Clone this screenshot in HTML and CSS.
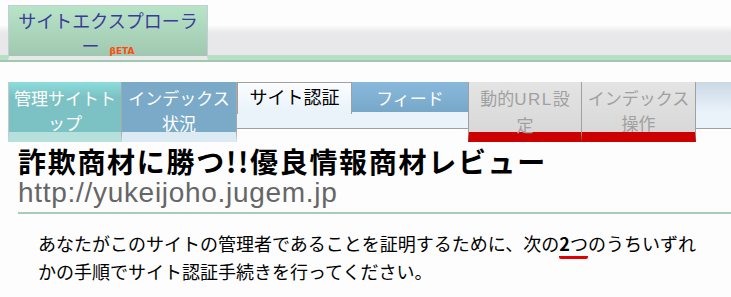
FILE: index.html
```html
<!DOCTYPE html>
<html lang="ja">
<head>
  <meta charset="UTF-8" />
  <title>サイトエクスプローラー - サイト認証</title>
  <link rel="stylesheet" href="styles.css">
</head>
<body>

  <!-- Header -->
  <div class="header">
    <div class="logo">サイトエクスプローラー<span class="beta">βETA</span></div>
  </div>

  <!-- Tabs -->
  <div class="tabs">
    <div class="tab tab-top">管理サイトトップ</div>
    <div class="tab tab-index">インデックス状況</div>
    <div class="tab tab-active">サイト認証</div>
    <div class="tab tab-feed">フィード</div>
    <div class="tab tab-off">動的<span class="latin">URL</span>設定</div>
    <div class="tab tab-off">インデックス操作</div>
  </div>

  <main>
    <h1>詐欺商材に勝つ!!優良情報商材レビュー</h1>
    <div class="site-url">http://yukeijoho.jugem.jp</div>

    <p class="intro">
      あなたがこのサイトの管理者であることを証明するために、次の<span class="mark"><b>2</b>つ</span>のうちいずれかの手順でサイト認証手続きを行ってください。
    </p>
  </main>

</body>
</html>
```

FILE: styles.css
```css
body {
  margin: 0;
  font-family: "Noto Sans CJK JP", sans-serif;
  background: #fdfdfd;
  color: #000;
}

/* header */
.header {
  height: 62px;
  padding: 5px 0 0 8px;
  box-sizing: border-box;
  background: linear-gradient(to bottom,
    #fdfdfd 0, #fdfdfd 25px, #e8e8ea 33px, #e8e8ea 55px,
    #b5e0c5 55px, #b5e0c5 60px, #a0c8b0 60px, #a0c8b0 62px);
}
.logo {
  width: 200px;
  height: 55px;
  box-sizing: border-box;
  border: 1px solid #c4ccd8;
  border-bottom: 4px solid #e8e8e8;
  background: linear-gradient(to bottom, #b8e4c8, #a0c8b0);
  color: #3a3a9a;
  font-size: 18px;
  line-height: 25px;
  text-align: center;
  padding: 2px 8px 0;
  overflow: hidden;
}
.beta {
  color: #ff4a10;
  font-family: "DejaVu Sans", sans-serif;
  font-size: 9px;
  font-weight: bold;
  margin-left: 10px;
  vertical-align: -1px;
}

/* tabs */
.tabs {
  display: flex;
  align-items: flex-start;
  margin: 20px 0 0 8px;
  height: 60px;
  background:
    linear-gradient(to bottom, #c9d9e5 0, #eaf2fa 30px, #eaf2fa 46px, #a0a0a0 46px, #a0a0a0 47px, #fdfdfd 47px);
}
.tab {
  width: 114px;
  box-sizing: border-box;
  border-right: 1px solid #a8a8a8;
  color: #fff;
  font-size: 17px;
  line-height: 25px;
  text-align: center;
  padding: 3px 4px 0;
  height: 60px;
}
.tab-top {
  border-left: 1px solid #c8c8c8;
  background: linear-gradient(to bottom, #8cdcdc, #7cc2c4 30%, #7cc2c4);
  border-bottom: 10px solid #b6e0dc;
}
.tab-index {
  width: 115px;
  background: #7aaac8;
  border-bottom: 10px solid #dceaf4;
}
.tab-active {
  width: 115px;
  height: 32px;
  border: 1px solid #a0a0a0;
  border-bottom: none;
  background: linear-gradient(to bottom, #fbfdfe, #e8f2fa);
  color: #000;
  font-size: 18px;
  padding-top: 1px;
}
.tab-feed {
  width: 116px;
  height: 30px;
  background: linear-gradient(to bottom, #88b8dc, #78a8c8);
  border-right: none;
}
.tab-off {
  border-left: 1px solid #a0a0a0;
  border-right: 1px solid #a0a0a0;
  background: linear-gradient(to bottom, #e4e4e4, #d8d8d8);
  color: #a0a0a0;
  border-bottom: 10px solid #cc0000;
}
.tab-off + .tab-off {
  border-left: none;
}
.latin {
  font-family: "Liberation Sans", sans-serif;
  letter-spacing: 1.5px;
}

/* content */
main {
  padding: 3px 0 0 18px;
}
h1 {
  margin: 0;
  font-size: 28px;
  line-height: 32px;
  font-weight: bold;
  letter-spacing: 1.7px;
}
.site-url {
  font-family: "Liberation Sans", sans-serif;
  font-size: 28px;
  line-height: 32px;
  letter-spacing: 0.7px;
  color: #666;
  padding-bottom: 3px;
  border-bottom: 2px solid #a8cdb6;
}
.intro {
  margin: 15px 0 0;
  padding: 0 20px;
  font-size: 18px;
  line-height: 28px;
}
.mark {
  border-bottom: 3px solid #e00000;
  border-radius: 2px;
}
```
